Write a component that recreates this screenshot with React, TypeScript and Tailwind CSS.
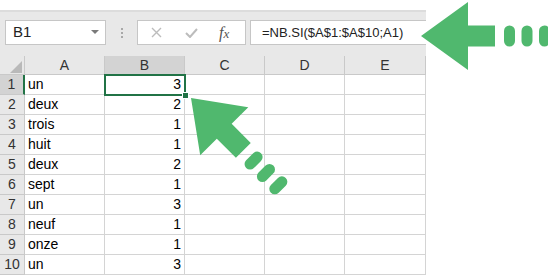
const ROWS: [string, number][] = [
  ['un', 3], ['deux', 2], ['trois', 1], ['huit', 1], ['deux', 2],
  ['sept', 1], ['un', 3], ['neuf', 1], ['onze', 1], ['un', 3],
]

const COLS = ['A', 'B', 'C', 'D', 'E']

export default function App() {
  return (
    <div className="relative w-[548px] h-[276px] overflow-hidden bg-white text-black" style={{ fontFamily: '"Liberation Sans", Arial, sans-serif' }}>
      <div className="w-[426px]">
        <div className="h-[10px]" />

        {/* Toolbar */}
        <div className="h-[46px] bg-[#e8e8e8] border-t-2 border-[#dcdcdc] flex items-start pt-[8px] pl-[5px]">
          <div className="w-[101px] h-[25px] bg-white border border-[#c6c6c6] flex items-center justify-between pl-[7px] pr-[6px]">
            <span className="text-[15px] text-[#222]">B1</span>
            <svg width="8" height="5" viewBox="0 0 8 5"><path d="M0 0 L8 0 L4 4 Z" fill="#7a7a7a" /></svg>
          </div>
          <div className="w-[31px] h-[25px] flex flex-col items-center justify-center gap-[2px]">
            <span className="w-[2px] h-[2px] bg-[#a8a8a8]" />
            <span className="w-[2px] h-[2px] bg-[#a8a8a8]" />
            <span className="w-[2px] h-[2px] bg-[#a8a8a8]" />
          </div>
          <div className="w-[109px] h-[25px] bg-white border border-[#c6c6c6] flex items-center">
            <svg className="ml-[13px]" width="11" height="11" viewBox="0 0 11 11">
              <path d="M1 1 L10 10 M10 1 L1 10" stroke="#bcbcbc" strokeWidth="1.4" />
            </svg>
            <svg className="ml-[23px]" width="13" height="10" viewBox="0 0 13 10">
              <path d="M1 5 L5 9 L12 1" stroke="#bcbcbc" strokeWidth="2" fill="none" />
            </svg>
            <span className="ml-[21px] text-[16px] italic text-[#555]" style={{ fontFamily: '"Liberation Serif", serif' }}>
              f<span className="text-[13px]">x</span>
            </span>
          </div>
          <div className="ml-[4px] flex-1 h-[25px] bg-white border border-[#c6c6c6] border-r-0 flex items-center pl-[11px]">
            <span className="text-[13px] text-[#222]">=NB.SI($A$1:$A$10;A1)</span>
          </div>
        </div>

        {/* Column headers */}
        <div className="flex h-[19px] bg-[#e8e8e8] border-b border-[#c9c9c9]">
          <div className="w-[25px] border-r border-[#c9c9c9] relative">
            <svg className="absolute left-[10px] top-[5px]" width="12" height="12" viewBox="0 0 12 12">
              <path d="M12 0 L12 12 L0 12 Z" fill="#b9b9b9" />
            </svg>
          </div>
          {COLS.map(c => (
            <div
              key={c}
              className={
                c === 'B'
                  ? 'w-[80px] border-r border-[#c9c9c9] bg-[#d3d3d3] flex items-center justify-center text-[14px] text-[#333]'
                  : c === 'E'
                  ? 'w-[81px] border-r border-[#c9c9c9] flex items-center justify-center text-[14px] text-[#333]'
                  : 'w-[80px] border-r border-[#c9c9c9] flex items-center justify-center text-[14px] text-[#333]'
              }
            >
              {c}
            </div>
          ))}
        </div>

        {/* Rows */}
        {ROWS.map(([word, n], i) => (
          <div key={i} className="flex h-[20px]">
            <div
              className={
                i === 0
                  ? 'w-[25px] bg-[#d3d3d3] border-r-2 border-[#217346] border-b border-b-[#c9c9c9] flex items-center justify-center text-[14px] text-[#333]'
                  : 'w-[25px] bg-[#e8e8e8] border-r border-[#c9c9c9] border-b flex items-center justify-center text-[14px] text-[#333]'
              }
            >
              {i + 1}
            </div>
            <div className="w-[80px] border-r border-b border-[#d4d4d4] flex items-center pl-[3px] text-[14px]">{word}</div>
            <div className="w-[80px] border-r border-b border-[#d4d4d4] flex items-center justify-end pr-[3px] text-[14px]">{n}</div>
            <div className="w-[80px] border-r border-b border-[#d4d4d4]" />
            <div className="w-[80px] border-r border-b border-[#d4d4d4]" />
            <div className="w-[81px] border-r border-b border-[#d4d4d4]" />
          </div>
        ))}
      </div>

      {/* Selected cell B1 */}
      <div className="absolute left-[104px] top-[74px] w-[82px] h-[22px] border-2 border-[#217346]" />
      <div className="absolute left-[182px] top-[92px] w-[7px] h-[7px] bg-[#217346] border border-white" />

      {/* Arrows */}
      <svg className="absolute left-0 top-0" width="548" height="276" viewBox="0 0 548 276">
        <Arrow transform="translate(421 36)" />
        <Arrow transform="translate(191 98) rotate(45)" />
      </svg>
    </div>
  )
}

function Arrow({ transform }: { transform: string }) {
  return (
    <g transform={transform} fill="#50b86e">
      <path d="M0 0 L47 -34 L47 -10.5 L74 -10.5 L74 10.5 L47 10.5 L47 34 Z" />
      <rect x="83" y="-10.5" width="11" height="21" rx="5.5" />
      <rect x="100.5" y="-10.5" width="11" height="21" rx="5.5" />
      <rect x="118" y="-10.5" width="11" height="21" rx="5.5" />
    </g>
  )
}
